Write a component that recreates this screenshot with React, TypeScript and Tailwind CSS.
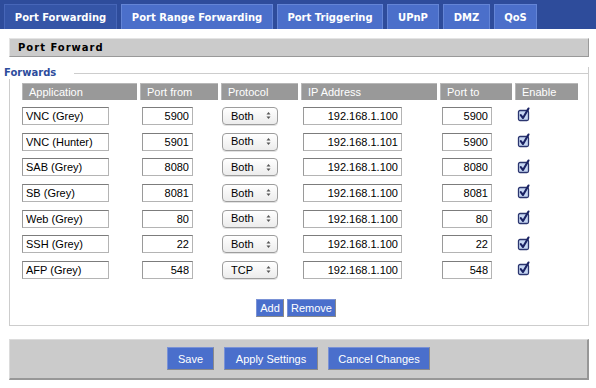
import React from 'react';

const tabs = [
  { label: 'Port Forwarding', w: 'w-[113px]', active: true },
  { label: 'Port Range Forwarding', w: 'w-[152px]' },
  { label: 'Port Triggering', w: 'w-[106px]' },
  { label: 'UPnP', w: 'w-[52px]' },
  { label: 'DMZ', w: 'w-[47px]' },
  { label: 'QoS', w: 'w-[43px]' },
];

const rows = [
  ['VNC (Grey)', '5900', 'Both', '192.168.1.100', '5900'],
  ['VNC (Hunter)', '5901', 'Both', '192.168.1.101', '5900'],
  ['SAB (Grey)', '8080', 'Both', '192.168.1.100', '8080'],
  ['SB (Grey)', '8081', 'Both', '192.168.1.100', '8081'],
  ['Web (Grey)', '80', 'Both', '192.168.1.100', '80'],
  ['SSH (Grey)', '22', 'Both', '192.168.1.100', '22'],
  ['AFP (Grey)', '548', 'TCP', '192.168.1.100', '548'],
];

const heads = ['Application', 'Port from', 'Protocol', 'IP Address', 'Port to', 'Enable'];

const cols = 'grid grid-cols-[115px_78px_77px_136px_72px_63px] gap-x-[3px]';

const Field = ({ value, className }: { value: string; className: string }) => (
  <input
    readOnly
    value={value}
    className={`h-[18px] border border-[#b4b4b4] border-t-[#7c7c7c] border-l-[#9a9a9a] bg-white px-[3px] text-[11px] text-black outline-none ${className}`}
  />
);

const Select = ({ value }: { value: string }) => (
  <div className="ml-[1px] flex h-[18px] w-[56px] items-center justify-between rounded-[4px] border border-[#9d9d9d] bg-gradient-to-b from-white to-[#ececec] pl-[8px] pr-[6px] text-[11px] text-black shadow-[0_1px_0_#e2e2e2]">
    <span>{value}</span>
    <svg width="5" height="9" viewBox="0 0 5 9">
      <path d="M0.5 3.5 L2.5 1 L4.5 3.5 Z" fill="#555" />
      <path d="M0.5 5.5 L2.5 8 L4.5 5.5 Z" fill="#555" />
    </svg>
  </div>
);

const Check = () => (
  <svg width="14" height="15" viewBox="0 0 14 15" className="ml-[2px] -mt-[2px]">
    <rect x="1.5" y="3.5" width="10" height="10" rx="1.5" fill="#c7d7f3" stroke="#2b356f" strokeWidth="1.3" />
    <path d="M3.8 8.2 L6 11 L11.5 1.5" fill="none" stroke="#1b2364" strokeWidth="2.1" strokeLinecap="round" strokeLinejoin="round" />
  </svg>
);

const Btn = ({ label, className }: { label: string; className: string }) => (
  <button className={`flex items-center justify-center border border-[#7a92d6] border-r-[#8a8a8a] border-b-[#8a8a8a] bg-[#4a6fcc] text-white ${className}`}>
    {label}
  </button>
);

export default function App() {
  return (
    <div className="h-[388px] w-[596px] overflow-hidden bg-white font-['Liberation_Sans',Arial,sans-serif]">
      <div className="flex h-[29px] items-end gap-[4px] bg-[#2e4c9b] pl-[4px] font-['DejaVu_Sans',Verdana,sans-serif] text-[10px] font-bold text-white">
        {tabs.map((t) => (
          <div
            key={t.label}
            className={`flex h-[25px] items-center justify-center border border-b-0 ${t.w} ${
              t.active ? 'border-[#4766b8] bg-[#3555a7]' : 'border-[#6485d6] bg-[#4b6fca]'
            }`}
          >
            {t.label}
          </div>
        ))}
      </div>

      <div className="ml-[9px] mr-[7px] flex flex-col">
        <div className="mt-[9px] flex h-[19px] items-center border border-[#e4e4e4] border-b-[#999] border-r-[#9a9a9a] bg-[#cbcbcb] pl-[8px] font-['DejaVu_Sans',Verdana,sans-serif] text-[10px] font-bold tracking-[1px] text-black">
          Port Forward
        </div>

        <div className="mt-[10px] flex flex-col border-x border-b border-[#cdcdcd] pb-[8px]">
          <div className="-ml-[7px] -mr-px flex h-[12px] items-center">
            <span className="bg-white pr-[18px] pl-[1px] font-['DejaVu_Sans',Verdana,sans-serif] text-[10px] font-bold leading-[12px] text-[#2d4c9c]">
              Forwards
            </span>
            <div className="flex-1 border-t border-[#cdcdcd]" />
          </div>

          <div className={`${cols} ml-[12px] mt-[4px]`}>
            {heads.map((h) => (
              <div
                key={h}
                className="flex h-[17px] items-center border-t border-l border-[#b8b8b8] bg-[#999999] pl-[6px] text-[11px] text-white"
              >
                {h}
              </div>
            ))}
          </div>

          <div className="ml-[12px] mt-[3px] flex flex-col">
            {rows.map((r) => (
              <div key={r[0]} className={`${cols} h-[25.7px] items-center`}>
                <Field value={r[0]} className="w-[87px] text-left" />
                <Field value={r[1]} className="ml-[2px] w-[51px] text-right" />
                <Select value={r[2]} />
                <Field value={r[3]} className="ml-[2px] w-[99px] text-right" />
                <Field value={r[4]} className="ml-[2px] w-[50px] text-right" />
                <Check />
              </div>
            ))}
          </div>

          <div className="mt-[16px] flex justify-center gap-[3px] pr-[6px] text-[11px]">
            <Btn label="Add" className="h-[18px] w-[28px]" />
            <Btn label="Remove" className="h-[18px] w-[49px]" />
          </div>
        </div>

        <div className="mt-[13px] flex h-[41px] items-center justify-center gap-[10px] border border-[#dcdcdc] border-b-2 border-r-2 border-b-[#979797] border-r-[#979797] bg-[#cbcbcb] text-[11px]">
          <Btn label="Save" className="h-[23px] w-[47px]" />
          <Btn label="Apply Settings" className="h-[23px] w-[94px]" />
          <Btn label="Cancel Changes" className="h-[23px] w-[102px]" />
        </div>
      </div>
    </div>
  );
}
